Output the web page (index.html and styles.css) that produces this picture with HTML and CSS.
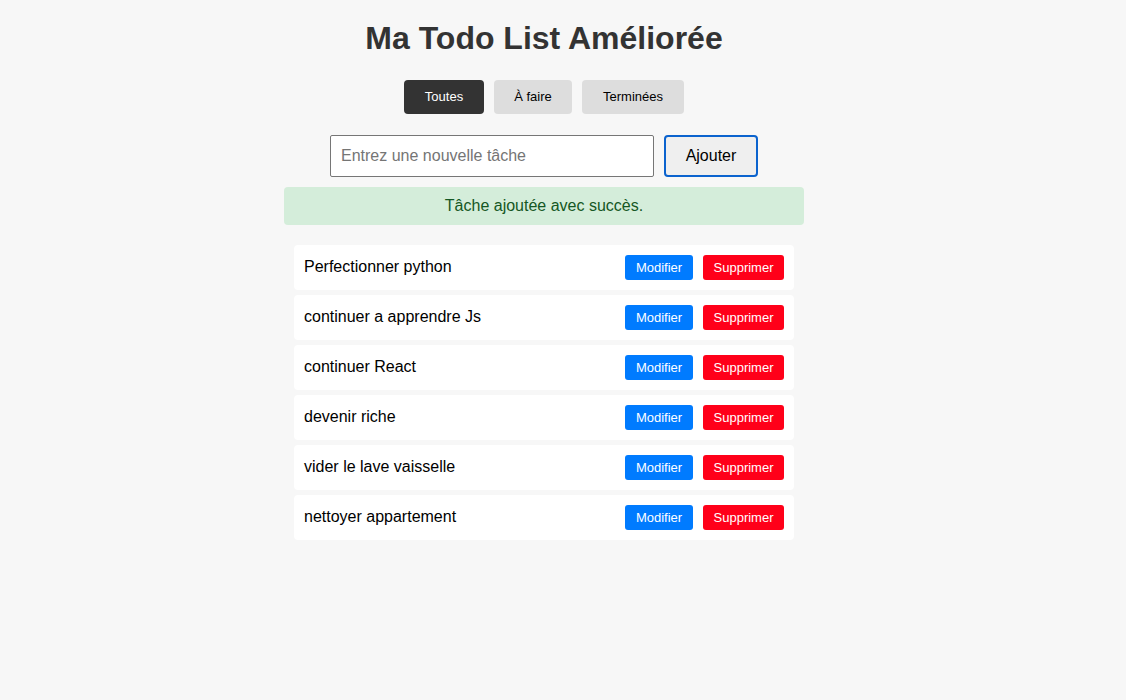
FILE: index.html
```html
<!DOCTYPE html>
<html lang="fr">
<head>
<meta charset="utf-8">
<title>Ma Todo List Améliorée</title>
<link rel="stylesheet" href="styles.css">
</head>
<body>
<div class="app">
  <h1 class="title">Ma Todo List Améliorée</h1>
  <div class="filters">
    <button class="filter active">Toutes</button>
    <button class="filter">À faire</button>
    <button class="filter">Terminées</button>
  </div>
  <div class="add-row">
    <input class="task-input" type="text" placeholder="Entrez une nouvelle tâche">
    <button class="add-btn">Ajouter</button>
  </div>
  <div class="message">Tâche ajoutée avec succès.</div>
  <ul class="list">
    <li class="item"><span class="item-text">Perfectionner python</span><span class="actions"><button class="btn edit">Modifier</button><button class="btn del">Supprimer</button></span></li>
    <li class="item"><span class="item-text">continuer a apprendre Js</span><span class="actions"><button class="btn edit">Modifier</button><button class="btn del">Supprimer</button></span></li>
    <li class="item"><span class="item-text">continuer React</span><span class="actions"><button class="btn edit">Modifier</button><button class="btn del">Supprimer</button></span></li>
    <li class="item"><span class="item-text">devenir riche</span><span class="actions"><button class="btn edit">Modifier</button><button class="btn del">Supprimer</button></span></li>
    <li class="item"><span class="item-text">vider le lave vaisselle</span><span class="actions"><button class="btn edit">Modifier</button><button class="btn del">Supprimer</button></span></li>
    <li class="item"><span class="item-text">nettoyer appartement</span><span class="actions"><button class="btn edit">Modifier</button><button class="btn del">Supprimer</button></span></li>
  </ul>
</div>
</body>
</html>
```
FILE: styles.css
```css
* { box-sizing: border-box; }
html, body { margin: 0; padding: 0; }
body {
  background: #f7f7f7;
  font-family: "Liberation Sans", Arial, Helvetica, sans-serif;
  color: #000;
  display: flex;
  justify-content: center;
  padding: 20px 38px 0 0;
  min-height: 700px;
}
.app {
  width: 520px;
  display: flex;
  flex-direction: column;
  align-items: center;
}
.title {
  margin: 0 0 23px;
  font-size: 32px;
  line-height: 37px;
  font-weight: bold;
  color: #333;
}
.filters {
  display: flex;
  gap: 10px;
  margin-bottom: 21px;
}
.filter {
  font-family: inherit;
  font-size: 13px;
  line-height: 14px;
  height: 34px;
  padding: 0;
  border: none;
  border-radius: 4px;
  background: #ddd;
  color: #000;
}
.f-all { width: 80px; }
.filter:nth-child(1) { width: 80px; }
.filter:nth-child(2) { width: 78px; }
.filter:nth-child(3) { width: 102px; }
.filter.active {
  background: #333;
  color: #fff;
}
.add-row {
  display: flex;
  gap: 10px;
  margin-bottom: 10px;
}
.task-input {
  width: 324px;
  height: 42px;
  padding: 10px;
  font-family: inherit;
  font-size: 16px;
  border: 1px solid #767676;
  border-radius: 2px;
  background: #fff;
}
.task-input::placeholder { color: #757575; }
.add-btn {
  width: 94px;
  height: 42px;
  font-family: inherit;
  font-size: 16px;
  color: #000;
  background: #efefef;
  border: 2px solid #0b63ce;
  border-radius: 4px;
  padding: 0;
}
.message {
  width: 520px;
  height: 38px;
  background: #d4edda;
  color: #155724;
  border-radius: 4px;
  font-size: 16px;
  display: flex;
  align-items: center;
  justify-content: center;
}
.list {
  list-style: none;
  margin: 0;
  padding: 20px 10px 0;
  width: 520px;
  display: flex;
  flex-direction: column;
  gap: 5px;
}
.item {
  background: #fff;
  border-radius: 4px;
  height: 45px;
  padding: 0 10px;
  display: flex;
  align-items: center;
  justify-content: space-between;
  font-size: 16px;
}
.item-text { margin-top: -2px; }
.actions {
  display: flex;
  gap: 10px;
}
.btn {
  font-family: inherit;
  font-size: 13px;
  line-height: 15px;
  height: 25px;
  padding: 0;
  border: none;
  border-radius: 3px;
  color: #fff;
}
.btn.edit { background: #007bff; width: 68px; }
.btn.del { background: #ff0019; width: 81px; }
```
